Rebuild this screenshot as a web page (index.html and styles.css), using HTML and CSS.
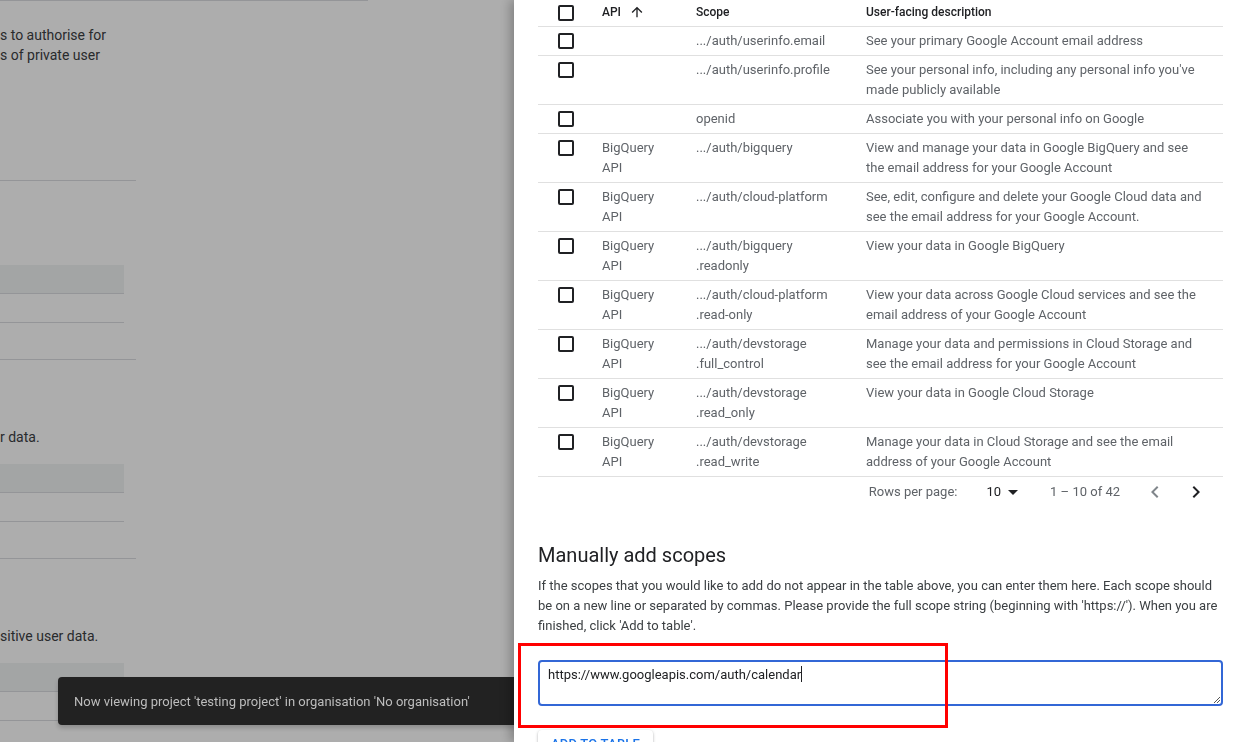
FILE: index.html
```html
<!DOCTYPE html>
<html lang="en">
<head>
<meta charset="utf-8">
<title>OAuth scopes</title>
<link rel="stylesheet" href="styles.css">
</head>
<body>
<div class="page">
  <div class="page-col">
    <div class="rule rule-top"></div>
    <div class="frag frag-intro">
      <div>s to authorise for</div>
      <div>s of private user</div>
    </div>
    <div class="rule rule-a"></div>
    <div class="tbl-head first"></div>
    <div class="rule rule-short mt28"></div>
    <div class="rule rule-long mt36"></div>

    <div class="frag frag-sec">r data.</div>
    <div class="tbl-head"></div>
    <div class="rule rule-short mt28"></div>
    <div class="rule rule-long mt36"></div>

    <div class="frag frag-sec">sitive user data.</div>
    <div class="tbl-head"></div>
    <div class="rule rule-short mt28"></div>
  </div>
</div>

<div class="scrim"></div>

<div class="snackbar">Now viewing project 'testing project' in organisation 'No organisation'</div>

<aside class="sheet">
  <div class="scope-table">
    <div class="row head">
      <div class="cell c-check"><span class="box"></span></div>
      <div class="cell c-api">API <svg class="sort" viewBox="0 0 24 24"><path d="M4 12l1.41 1.41L11 7.83V20h2V7.83l5.58 5.59L20 12l-8-8-8 8z"/></svg></div>
      <div class="cell">Scope</div>
      <div class="cell">User-facing description</div>
    </div>
    <div class="row">
      <div class="cell c-check"><span class="box"></span></div>
      <div class="cell"></div>
      <div class="cell">.../auth/userinfo.email</div>
      <div class="cell c-desc">See your primary Google Account email address</div>
    </div>
    <div class="row">
      <div class="cell c-check"><span class="box"></span></div>
      <div class="cell"></div>
      <div class="cell">.../auth/userinfo.profile</div>
      <div class="cell c-desc">See your personal info, including any personal info you've made publicly available</div>
    </div>
    <div class="row">
      <div class="cell c-check"><span class="box"></span></div>
      <div class="cell"></div>
      <div class="cell">openid</div>
      <div class="cell c-desc">Associate you with your personal info on Google</div>
    </div>
    <div class="row">
      <div class="cell c-check"><span class="box"></span></div>
      <div class="cell">BigQuery API</div>
      <div class="cell">.../auth/bigquery</div>
      <div class="cell c-desc">View and manage your data in Google BigQuery and see the email address for your Google Account</div>
    </div>
    <div class="row">
      <div class="cell c-check"><span class="box"></span></div>
      <div class="cell">BigQuery API</div>
      <div class="cell">.../auth/cloud-platform</div>
      <div class="cell c-desc">See, edit, configure and delete your Google Cloud data and see the email address for your Google Account.</div>
    </div>
    <div class="row">
      <div class="cell c-check"><span class="box"></span></div>
      <div class="cell">BigQuery API</div>
      <div class="cell">.../auth/bigquery<br>.readonly</div>
      <div class="cell c-desc">View your data in Google BigQuery</div>
    </div>
    <div class="row">
      <div class="cell c-check"><span class="box"></span></div>
      <div class="cell">BigQuery API</div>
      <div class="cell">.../auth/cloud-platform<br>.read-only</div>
      <div class="cell c-desc">View your data across Google Cloud services and see the email address of your Google Account</div>
    </div>
    <div class="row">
      <div class="cell c-check"><span class="box"></span></div>
      <div class="cell">BigQuery API</div>
      <div class="cell">.../auth/devstorage<br>.full_control</div>
      <div class="cell c-desc">Manage your data and permissions in Cloud Storage and see the email address for your Google Account</div>
    </div>
    <div class="row">
      <div class="cell c-check"><span class="box"></span></div>
      <div class="cell">BigQuery API</div>
      <div class="cell">.../auth/devstorage<br>.read_only</div>
      <div class="cell c-desc">View your data in Google Cloud Storage</div>
    </div>
    <div class="row">
      <div class="cell c-check"><span class="box"></span></div>
      <div class="cell">BigQuery API</div>
      <div class="cell">.../auth/devstorage<br>.read_write</div>
      <div class="cell c-desc">Manage your data in Cloud Storage and see the email address of your Google Account</div>
    </div>
  </div>

  <div class="pager">
    <span class="rpp">Rows per page:</span>
    <span class="rpp-select">10<svg class="drop" viewBox="0 0 24 24"><path d="M7 10l5 5 5-5z"/></svg></span>
    <span class="range">1 – 10 of 42</span>
    <svg class="nav prev" viewBox="0 0 24 24"><path d="M15.41 7.41L14 6l-6 6 6 6 1.41-1.41L10.83 12z"/></svg>
    <svg class="nav next" viewBox="0 0 24 24"><path d="M10 6L8.59 7.41 13.17 12l-4.58 4.59L10 18l6-6z"/></svg>
  </div>

  <h2 class="manual-title">Manually add scopes</h2>
  <p class="manual-text">If the scopes that you would like to add do not appear in the table above, you can enter them here. Each scope should be on a new line or separated by commas. Please provide the full scope string (beginning with 'https://'). When you are finished, click 'Add to table'.</p>

  <div class="field">https://www.googleapis.com/auth/calendar<span class="caret"></span>
    <svg class="grip" viewBox="0 0 10 10"><path d="M9 3L3 9M9 6L6 9" stroke="#555" stroke-width="1" fill="none"/></svg>
  </div>

  <button class="add-btn">Add to table</button>

  <div class="annot"></div>
</aside>
</body>
</html>
```

FILE: styles.css
```css
html, body {
  margin: 0;
  padding: 0;
  width: 1243px;
  height: 742px;
  overflow: hidden;
  background: #ffffff;
  font-family: "Roboto", "Liberation Sans", sans-serif;
}

/* ---------- background page ---------- */
.page {
  width: 1243px;
  height: 742px;
  background: #fff;
}
.page-col {
  width: 136px;
}
.rule {
  height: 1px;
  background: #dadce0;
}
.rule-top { width: 368px; }
.rule-a { width: 136px; margin-top: 115px; }
.rule-short { width: 124px; }
.rule-long { width: 136px; }
.mt28 { margin-top: 28px; }
.mt36 { margin-top: 36px; }

.frag {
  font-size: 14px;
  line-height: 20px;
  color: #3c4043;
  white-space: nowrap;
}
.frag-intro { margin-top: 24px; }
.frag-sec { margin-top: 67px; }

.tbl-head {
  width: 124px;
  height: 28px;
  margin-top: 17px;
  background: #f1f3f4;
  border-bottom: 1px solid #dadce0;
}
.tbl-head.first { margin-top: 84px; }

.scrim {
  position: fixed;
  inset: 0;
  background: rgba(0, 0, 0, 0.32);
}

.snackbar {
  position: fixed;
  left: 58px;
  top: 677px;
  width: 560px;
  height: 48px;
  box-sizing: border-box;
  padding: 0 16px;
  display: flex;
  align-items: center;
  background: #222222;
  border-radius: 4px;
  color: #bdbdbd;
  font-size: 13px;
  box-shadow: 0 3px 5px rgba(0,0,0,.2);
}

/* ---------- side sheet ---------- */
.sheet {
  position: fixed;
  top: 0;
  right: 0;
  width: 729px;
  height: 742px;
  box-sizing: border-box;
  padding: 0 20px 0 24px;
  background: #fff;
  box-shadow: -4px 0 10px rgba(0, 0, 0, 0.25);
  color: #5f6368;
  font-size: 13px;
  line-height: 20px;
}

.scope-table {
  width: 685px;
}
.row {
  display: grid;
  grid-template-columns: 52px 94px 170px 1fr;
  border-bottom: 1px solid #e0e0e0;
  min-height: 28px;
}
.cell {
  padding: 4px 12px;
}
.c-desc { padding-right: 16px; }
.c-check {
  padding: 6px 0 0 20px;
}
.box {
  display: block;
  width: 16px;
  height: 16px;
  box-sizing: border-box;
  border: 2px solid #202124;
  border-radius: 2px;
}
.row.head {
  height: 26px;
  min-height: 26px;
  align-items: center;
  font-size: 12px;
  font-weight: 500;
  color: #202124;
  line-height: 16px;
}
.row.head .cell { padding-top: 0; padding-bottom: 2px; }
.row.head .c-check { padding-top: 0; padding-bottom: 0; }
.c-api {
  display: flex;
  align-items: center;
  gap: 8px;
}
.sort {
  width: 16px;
  height: 16px;
  fill: #202124;
}

.pager {
  display: flex;
  justify-content: flex-end;
  align-items: center;
  height: 30px;
  padding-right: 15px;
  width: 685px;
  box-sizing: border-box;
  font-size: 13px;
  color: #5f6368;
}
.rpp { margin-right: 29px; }
.rpp-select {
  display: flex;
  align-items: center;
  color: #202124;
  margin-right: 25px;
}
.drop {
  width: 24px;
  height: 24px;
  fill: #202124;
}
.range { margin-right: 23px; }
.nav {
  width: 24px;
  height: 24px;
}
.prev { fill: #80868b; margin-right: 17px; }
.next { fill: #202124; }

.manual-title {
  margin: 34px 0 0;
  font-size: 20px;
  line-height: 28px;
  font-weight: 400;
  color: #202124;
}
.manual-text {
  margin: 7px 0 0;
  color: #3c4043;
  font-size: 13px;
  line-height: 20px;
}

.field {
  position: relative;
  margin-top: 24px;
  height: 46px;
  width: 685px;
  box-sizing: border-box;
  border: 2px solid #3367d6;
  border-radius: 4px;
  padding: 3px 8px;
  color: #202124;
  font-size: 13px;
  line-height: 20px;
}
.caret {
  display: inline-block;
  width: 1px;
  height: 16px;
  background: #202124;
  vertical-align: -3px;
}
.grip {
  position: absolute;
  right: 0;
  bottom: 0;
  width: 10px;
  height: 10px;
}

.add-btn {
  display: block;
  margin-top: 24px;
  height: 36px;
  padding: 0 13px 8px;
  border: none;
  border-radius: 4px;
  background: #fff;
  box-shadow: 0 1px 3px rgba(60,64,67,.3), 0 1px 2px rgba(60,64,67,.15);
  color: #1a73e8;
  font-family: "Roboto", "Liberation Sans", sans-serif;
  font-size: 13px;
  line-height: 20px;
  font-weight: 500;
  text-transform: uppercase;
  letter-spacing: .2px;
}

.annot {
  position: absolute;
  left: 4px;
  top: 643px;
  width: 430px;
  height: 85px;
  box-sizing: border-box;
  border: 3px solid #ff0000;
  pointer-events: none;
}
```
